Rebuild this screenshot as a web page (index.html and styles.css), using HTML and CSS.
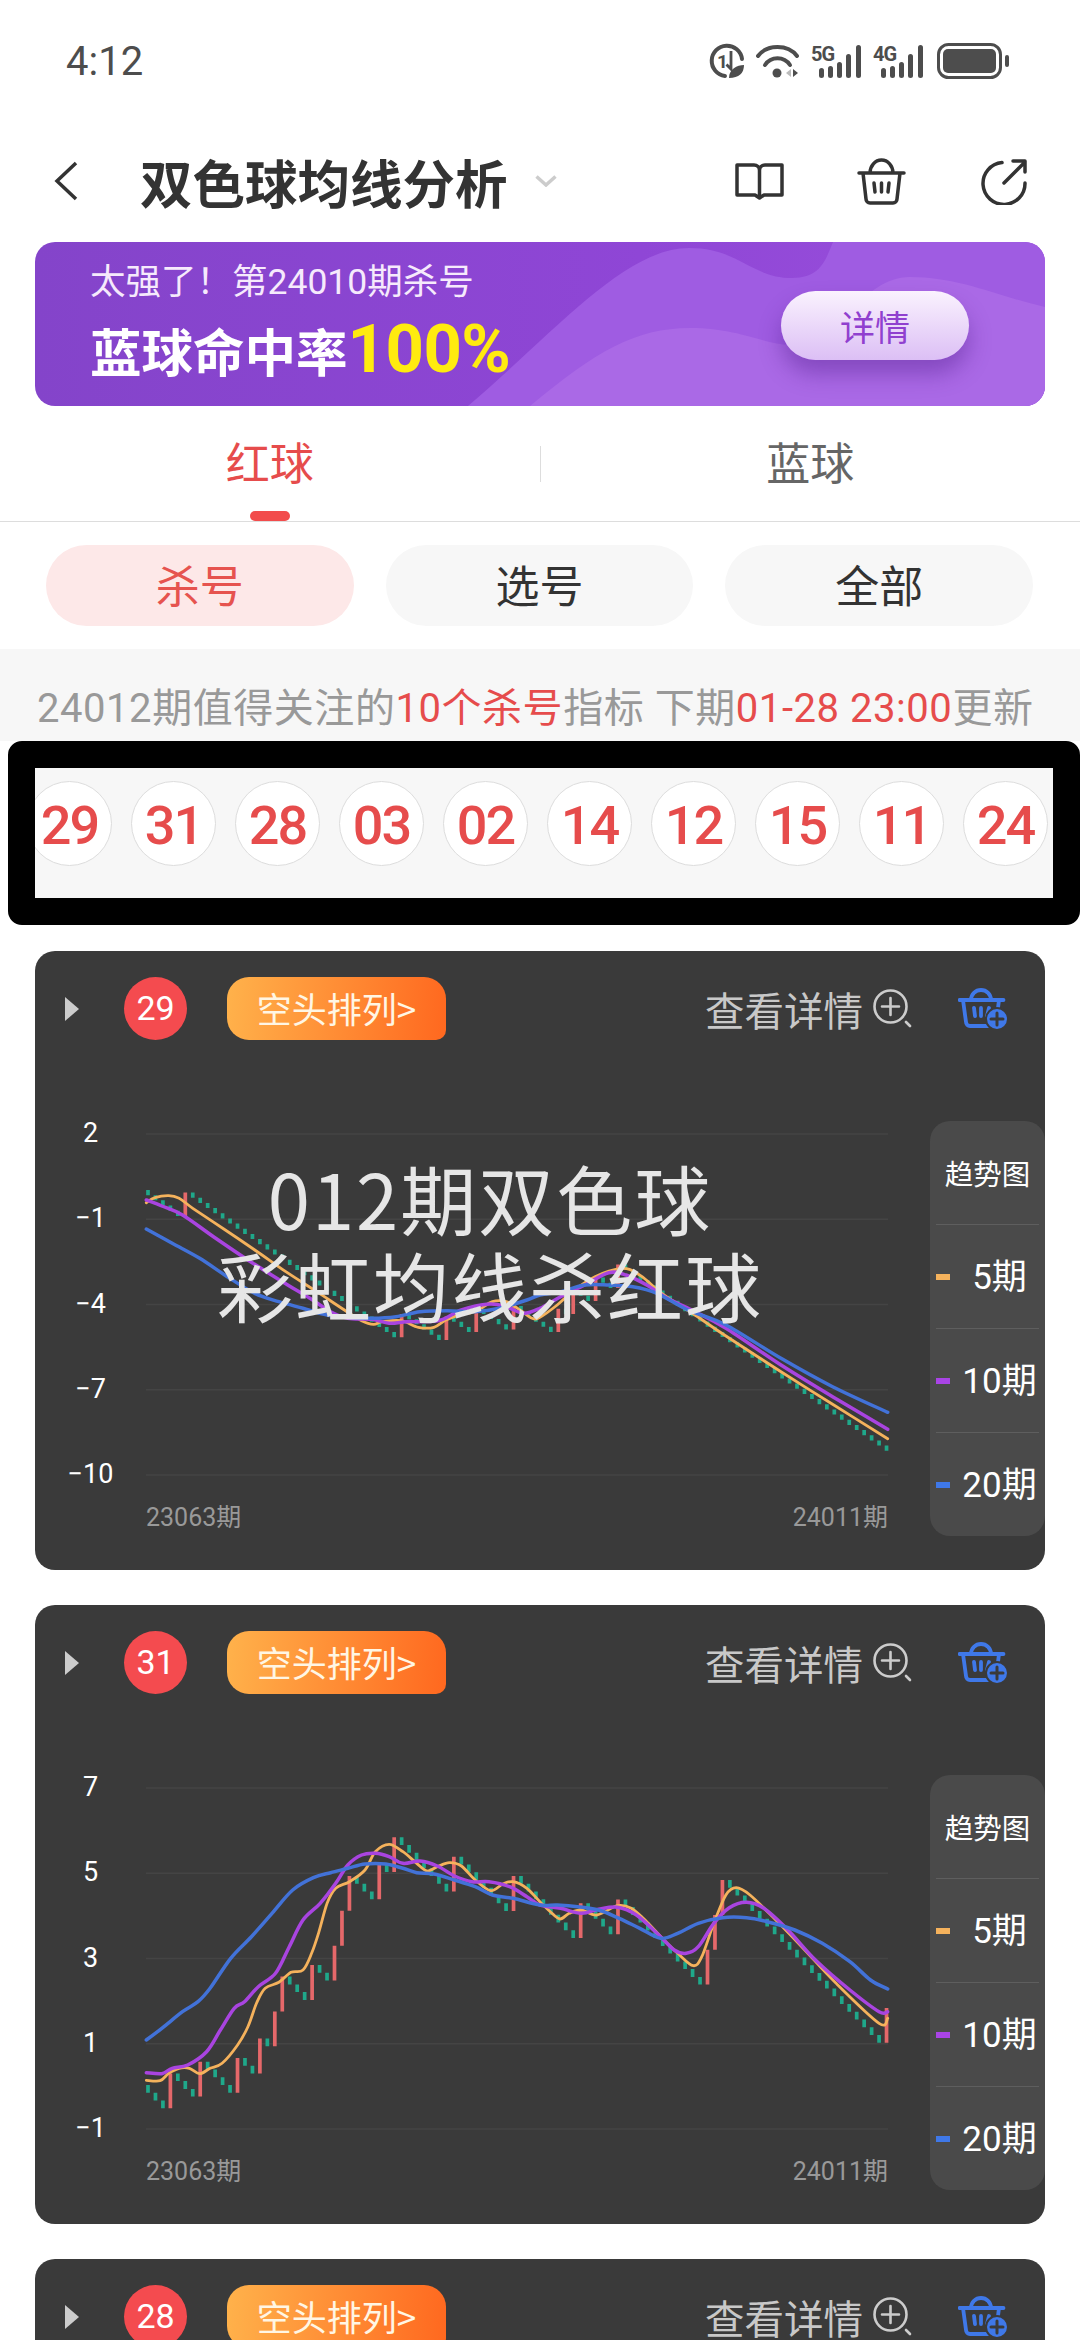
FILE: index.html
```html
<!DOCTYPE html>
<html lang="zh-CN">
<head>
<meta charset="utf-8">
<title>双色球均线分析</title>
<link rel="stylesheet" href="styles.css">
</head>
<body>
<div class="status">
  <span class="time">4:12</span>
  <div class="status-icons">
    <svg class="si-data" viewBox="0 0 34 34"><path class="st" d="M15 32A15.200 15.200 0 1 1 32 15"/><text class="si-one" x="7" y="24">1</text><path class="st2" d="M21 7v18l-4.500-4.500"/><path class="sf" d="M19 34c0-9 8-13 15-13 0 8-5 13-15 13z"/></svg>
    <svg class="si-wifi" viewBox="0 0 43 33"><path class="st" d="M2 11C11-1 32-1 41 11"/><path class="st" d="M9 20C15 11 28 11 34 20"/><circle class="sf" cx="21" cy="28" r="4.500"/><path class="sf-l" d="M35 24v8l-5-4z"/><path class="sf" d="M37 24v8l5-4z"/></svg>
    <svg class="si-sig" viewBox="0 0 50 33"><text class="si-g" x="0" y="16">5G</text><rect class="sf" x="8" y="23" width="5" height="10" rx="2.500"/><rect class="sf" x="17" y="21" width="5" height="12" rx="2.500"/><rect class="sf" x="26" y="17" width="5" height="16" rx="2.500"/><rect class="sf" x="35" y="9" width="5" height="24" rx="2.500"/><rect class="sf" x="45" y="0" width="5" height="33" rx="2.500"/></svg>
    <svg class="si-sig" viewBox="0 0 50 33"><text class="si-g" x="0" y="16">4G</text><rect class="sf" x="8" y="23" width="5" height="10" rx="2.500"/><rect class="sf" x="17" y="21" width="5" height="12" rx="2.500"/><rect class="sf" x="26" y="17" width="5" height="16" rx="2.500"/><rect class="sf" x="35" y="9" width="5" height="24" rx="2.500"/><rect class="sf" x="45" y="0" width="5" height="33" rx="2.500"/></svg>
    <svg class="si-bat" viewBox="0 0 72 36"><rect class="bat-o" x="1.500" y="1.500" width="62" height="33" rx="10"/><rect class="sf" x="6" y="6" width="53" height="24" rx="5"/><rect class="sf" x="68" y="12" width="4" height="12" rx="2"/></svg>
  </div>
</div>

<header class="topbar">
  <svg class="back" viewBox="0 0 24 40"><path d="M22 2L3 20l19 18"/></svg>
  <h1 class="title">双色球均线分析</h1>
  <svg class="caret" viewBox="0 0 22 12"><path d="M1.500 1.500L11 10l9.500-8.500"/></svg>
  <div class="top-actions">
    <svg class="ic-book" viewBox="0 0 49 38"><path d="M24.500 35V8.500A5.500 5.500 0 0 0 19 3H2v30h18l4.500 3 4.500-3h18V3H30a5.500 5.500 0 0 0-5.500 5.500"/></svg>
    <svg class="ic-cart" viewBox="0 0 49 47"><path d="M13 15a11.500 13 0 0 1 23 0M2 15h45M6 15l3 26a4 4 0 0 0 4 4h23a4 4 0 0 0 4-4l3-26M17 25l1 9M24.500 25v9M32 25l-1 9"/></svg>
    <svg class="ic-share" viewBox="0 0 46 47"><path d="M21 4.500A21 21 0 1 0 44 25M23 25L44 4M32 3h12v11"/></svg>
  </div>
</header>

<section class="banner">
  <svg class="banner-art" viewBox="0 0 1010 164" preserveAspectRatio="none">
    <path class="wave-a" d="M433 164C520 90 590 6 654 6c50 0 62 30 103 30 30 0 34-20 41-36h212v164z"/>
    <path class="wave-b" d="M495 164C560 110 600 86 655 86c50 0 75 17 100 17 50 0 70-68 120-68 50 0 90 20 135 30v99z"/>
  </svg>
  <div class="banner-text">
    <p class="banner-l1">太强了！第24010期杀号</p>
    <p class="banner-l2">蓝球命中率<span class="yellow">100%</span></p>
  </div>
  <button class="banner-btn">详情</button>
</section>

<nav class="tabs">
  <div class="tab tab-on">红球</div>
  <div class="tab">蓝球</div>
</nav>

<div class="pills">
  <div class="pill pill-on">杀号</div>
  <div class="pill">选号</div>
  <div class="pill">全部</div>
</div>

<div class="notice">24012期值得关注的<em>10个杀号</em>指标 下期<em>01-28 23:00</em>更新</div>

<div class="balls-frame">
  <div class="balls">
    <span class="ball">29</span><span class="ball">31</span><span class="ball">28</span><span class="ball">03</span><span class="ball">02</span><span class="ball">14</span><span class="ball">12</span><span class="ball">15</span><span class="ball">11</span><span class="ball">24</span>
  </div>
</div>

<main class="cards">
  <article class="card">
    <div class="card-head">
      <i class="tri"></i><span class="num">29</span><span class="tag">空头排列&gt;</span>
      <span class="more">查看详情</span>
      <svg class="ic-zoom" viewBox="0 0 40 40"><circle cx="17.500" cy="17.500" r="16"/><path d="M17.500 9v17M9 17.500h17M33 33l4 4"/></svg>
      <svg class="ic-add" viewBox="0 0 50 42"><path d="M13 12a10 10 0 0 1 20 0M1.500 12h44M5 12l3 22a4 4 0 0 0 4 4h18M41 12l-1 8M16 20l1 8M23 20v8M31 20l-2 8"/><circle class="add-dot" cx="39" cy="31" r="11"/><path class="add-plus" d="M39 25v12M33 31h12"/></svg>
    </div>
    <div class="card-body">
      <div class="yaxis"><span>2</span><span>−1</span><span>−4</span><span>−7</span><span>−10</span></div>
      <div class="plot">
        <svg class="chart" data-chart="a" width="742" height="341" viewBox="0 0 742 341"></svg>
        <div class="xaxis"><span>23063期</span><span>24011期</span></div>
      </div>
      <div class="legend">
        <div class="lg-title">趋势图</div>
        <div class="lg-row"><i class="sw sw-o"></i><span>5期</span></div>
        <div class="lg-row"><i class="sw sw-p"></i><span>10期</span></div>
        <div class="lg-row"><i class="sw sw-b"></i><span>20期</span></div>
      </div>
    </div>
    <div class="watermark">012期双色球<br>彩虹均线杀红球</div>
  </article>

  <article class="card">
    <div class="card-head">
      <i class="tri"></i><span class="num">31</span><span class="tag">空头排列&gt;</span>
      <span class="more">查看详情</span>
      <svg class="ic-zoom" viewBox="0 0 40 40"><circle cx="17.500" cy="17.500" r="16"/><path d="M17.500 9v17M9 17.500h17M33 33l4 4"/></svg>
      <svg class="ic-add" viewBox="0 0 50 42"><path d="M13 12a10 10 0 0 1 20 0M1.500 12h44M5 12l3 22a4 4 0 0 0 4 4h18M41 12l-1 8M16 20l1 8M23 20v8M31 20l-2 8"/><circle class="add-dot" cx="39" cy="31" r="11"/><path class="add-plus" d="M39 25v12M33 31h12"/></svg>
    </div>
    <div class="card-body">
      <div class="yaxis"><span>7</span><span>5</span><span>3</span><span>1</span><span>−1</span></div>
      <div class="plot">
        <svg class="chart" data-chart="b" width="742" height="341" viewBox="0 0 742 341"></svg>
        <div class="xaxis"><span>23063期</span><span>24011期</span></div>
      </div>
      <div class="legend">
        <div class="lg-title">趋势图</div>
        <div class="lg-row"><i class="sw sw-o"></i><span>5期</span></div>
        <div class="lg-row"><i class="sw sw-p"></i><span>10期</span></div>
        <div class="lg-row"><i class="sw sw-b"></i><span>20期</span></div>
      </div>
    </div>
  </article>

  <article class="card">
    <div class="card-head">
      <i class="tri"></i><span class="num">28</span><span class="tag">空头排列&gt;</span>
      <span class="more">查看详情</span>
      <svg class="ic-zoom" viewBox="0 0 40 40"><circle cx="17.500" cy="17.500" r="16"/><path d="M17.500 9v17M9 17.500h17M33 33l4 4"/></svg>
      <svg class="ic-add" viewBox="0 0 50 42"><path d="M13 12a10 10 0 0 1 20 0M1.500 12h44M5 12l3 22a4 4 0 0 0 4 4h18M41 12l-1 8M16 20l1 8M23 20v8M31 20l-2 8"/><circle class="add-dot" cx="39" cy="31" r="11"/><path class="add-plus" d="M39 25v12M33 31h12"/></svg>
    </div>
  </article>
</main>
<script src="chart.js"></script>
</body>
</html>
```
FILE: styles.css
```css
* { box-sizing: border-box; }
html, body { margin: 0; padding: 0; background: #fff; }
html { height: 2340px; overflow: hidden; }
body {
  width: 1080px; height: 2340px; overflow: hidden;
  font-family: Roboto, "Noto Sans CJK SC", sans-serif;
  color: #333;
}
p, h1 { margin: 0; }

/* status bar */
.status { height: 124px; display: flex; align-items: center; justify-content: space-between; padding: 0 71px 2px 66px; }
.time { font-size: 40px; color: #4d4d4d; }
.status-icons { display: flex; align-items: center; gap: 12px; }
.status-icons svg { overflow: visible; }
.si-data { width: 34px; height: 34px; }
.si-wifi { width: 43px; height: 33px; }
.si-sig { width: 50px; height: 33px; }
.si-bat { width: 72px; height: 36px; margin-left: 2px; }
.st { fill: none; stroke: #4d4d4d; stroke-width: 4; stroke-linecap: round; }
.st2 { fill: none; stroke: #4d4d4d; stroke-width: 2.800; }
.sf { fill: #4d4d4d; }
.sf-l { fill: #bbb; }
.si-one { font: 700 19px Roboto, sans-serif; fill: #4d4d4d; }
.si-g { font: 700 20px Roboto, sans-serif; fill: #4d4d4d; letter-spacing: -1px; }
.bat-o { fill: none; stroke: #4d4d4d; stroke-width: 3; }

/* top bar */
.topbar { height: 118px; display: flex; align-items: center; padding: 0 53px 4px 54px; }
.back { width: 24px; height: 40px; }
.back path { fill: none; stroke: #333; stroke-width: 3.500; }
.title { margin-left: 62px; font-size: 52.500px; line-height: 70px; font-weight: 700; color: #333; font-family: "Noto Sans CJK SC", sans-serif; }
.caret { width: 22px; height: 12px; margin: 0 0 0 27px; }
.caret path { fill: none; stroke: #ccc; stroke-width: 3.500; }
.top-actions { margin-left: auto; display: flex; align-items: center; }
.top-actions svg { fill: none; stroke: #333; stroke-width: 3.500; stroke-linecap: round; stroke-linejoin: round; }
.ic-book { width: 49px; height: 38px; }
.ic-cart { width: 49px; height: 47px; margin-left: 73px; }
.ic-share { width: 46px; height: 47px; margin-left: 75px; }

/* banner */
.banner {
  position: relative; overflow: hidden;
  margin: 0 35px; height: 164px; border-radius: 20px;
  background: linear-gradient(90deg, #8444ca, #8f46d6 60%, #9a50dc);
  display: flex; align-items: center; justify-content: space-between;
  padding: 0 76px 0 55px;
}
.banner-art { position: absolute; inset: 0; width: 100%; height: 100%; }
.wave-a { fill: #9f5ce2; }
.wave-b { fill: #aa69e6; }
.banner-text, .banner-btn { position: relative; }
.banner-text { color: #fff; }
.banner-l1 { font-size: 35.500px; line-height: 50px; color: #f6eafc; margin-top: -3px; }
.banner-l2 { font-size: 51.500px; line-height: 66px; font-weight: 700; margin-top: 9px; }
.yellow { color: #ffeb0f; font-size: 67px; letter-spacing: -.5px; }
.banner-btn {
  width: 188px; height: 69px; border: 0; border-radius: 35px; margin-top: 2px;
  background: linear-gradient(180deg, #faf2fe, #dcbff5);
  color: #9040cf; font: 400 35px "Noto Sans CJK SC", sans-serif;
  box-shadow: 0 14px 22px rgba(70, 20, 130, .38);
}

/* tabs */
.tabs { height: 116px; display: flex; align-items: center; border-bottom: 1px solid #ddd; position: relative; }
.tab { flex: 1; text-align: center; font-size: 44px; line-height: 39px; color: #666; position: relative; height: 36px; }
.tab + .tab { border-left: 1px solid #ddd; }
.tab-on { color: #e64c4c; }
.tab-on::after { content: ""; position: absolute; left: 250px; top: 65px; width: 40px; height: 10px; border-radius: 5px; background: #f24c4c; }

/* filter pills */
.pills { display: flex; gap: 32px; padding: 23px 47px 23px 46px; }
.pill { flex: 1; height: 81px; border-radius: 41px; background: #f7f7f7; font-size: 44px; line-height: 86px; text-align: center; color: #333; }
.pill-on { background: #fde8e8; color: #e6534f; }

/* notice */
.notice { height: 92px; background: #f7f7f7; padding-left: 37px; font-size: 40px; line-height: 120px; color: #999; white-space: nowrap; overflow: hidden; letter-spacing: .55px; }
.notice em { font-style: normal; color: #e64c4c; }

/* number strip */
.balls-frame { margin-left: 8px; height: 184px; border: 27px solid #000; border-radius: 14px; background: #f7f7f7; overflow: hidden; width: 1072px; }
.balls { display: flex; gap: 19px; margin-left: -8px; padding-top: 13px; }
.ball { flex: none; width: 85px; height: 85px; border-radius: 50%; background: #fff; border: 1px solid #ddd; color: #e64c4c; font-size: 54px; font-weight: 500; line-height: 87px; text-align: center; letter-spacing: -2px; }

/* chart cards */
.cards { padding: 26px 35px 0; display: flex; flex-direction: column; gap: 35px; }
.card { position: relative; flex: none; height: 619px; border-radius: 20px; background: #3a3a3a; }
.card-head { display: flex; align-items: center; height: 63px; position: relative; top: 26px; padding-left: 30px; }
.tri { width: 0; height: 0; border-left: 14px solid #ccc; border-top: 12px solid transparent; border-bottom: 12px solid transparent; }
.num { margin-left: 45px; width: 63px; height: 63px; border-radius: 50%; background: #f44b4f; color: #fff; font-size: 34px; line-height: 63px; text-align: center; }
.tag { margin-left: 40px; width: 219px; height: 63px; border-radius: 22px 22px 10px 22px; background: linear-gradient(95deg, #ffb24b, #ff681f); color: #fff6e4; font: 400 35px/62px "Noto Sans CJK SC", sans-serif; text-align: center; }
.more { margin-left: auto; font: 400 39.500px/63px "Noto Sans CJK SC", sans-serif; color: #c8c8c8; }
.ic-zoom { width: 40px; height: 40px; margin-left: 10px; fill: none; stroke: #ccc; stroke-width: 2.600; stroke-linecap: round; }
.ic-add { width: 50px; height: 42px; margin: 0 37px 0 45px; fill: none; stroke: #3f78e8; stroke-width: 3.800; stroke-linecap: round; }
.add-dot { fill: #3f78e8; stroke: #3a3a3a; stroke-width: 2; }
.add-plus { stroke: #3a3a3a; stroke-width: 3; }

.card-body { display: flex; margin-top: 76px; height: 446px; }
.yaxis { width: 111px; display: flex; flex-direction: column; }
.yaxis span { height: 85.300px; line-height: 87px; font-size: 27px; color: #fff; text-align: center; }
.plot { width: 742px; padding-top: 43px; }
.chart { display: block; overflow: visible; }
.xaxis { display: flex; justify-content: space-between; margin-top: 27px; font-size: 25px; line-height: 34px; color: #999; }
.legend { width: 115px; height: 415px; margin: 31px 0 0 42px; border-radius: 20px; background: #4a4a4a; padding: 0 6px; color: #fff; }
.lg-title { height: 103px; text-align: center; font: 400 28.500px/103px "Noto Sans CJK SC", sans-serif; white-space: nowrap; margin: 0 -6px; }
.lg-row { height: 104px; border-top: 1px solid #5e5e5e; display: flex; align-items: center; font-size: 35px; }
.lg-row span { flex: 1; text-align: center; white-space: nowrap; margin-bottom: 6px; padding-left: 10px; }
.sw { width: 14px; height: 6px; flex: none; }
.sw-o { background: #f5b25c; }
.sw-p { background: #a944e6; }
.sw-b { background: #3f78e8; }

.watermark { position: absolute; left: 0; top: 203px; width: 910px; text-align: center; font: 400 76px/87px "Noto Sans CJK SC", sans-serif; color: #e6e6e6; letter-spacing: 2px; pointer-events: none; }

/* chart marks */
.grid { stroke: #444; stroke-width: 1.500; }
.bar-r { stroke: #e5686a; stroke-width: 3.700; fill: none; }
.bar-g { stroke: #1fa88a; stroke-width: 3.700; fill: none; }
.ln { fill: none; stroke-linecap: round; stroke-linejoin: round; }
.ln-o { stroke: #f5b25c; stroke-width: 2.800; }
.ln-p { stroke: #a944e0; stroke-width: 3.500; }
.ln-b { stroke: #4272d8; stroke-width: 3.500; }
```
FILE: chart.js
```js
var Z = 2.904, W = 1568;
function shift(a) { return a.map(function (p) { return [p[0] + W, p[1]]; }); }

var CHARTS = {
  a: {
    yoff: 53, open: 57, g: 5.17, r: 23.3,
    reds: [5, 34, 40, 44, 49, 55, 57, 60, 63],
    o: [[425,368],[450,353],[490,347],[520,355],[560,385],[650,447],[740,510],[830,575],[920,635],[1000,690],[1050,722],[1085,733],[1110,725],[1165,722],[1215,742],[1260,742],[1295,720],[1340,703],[1381,695],[1430,665],[1470,665],[1510,690],[1545,715]].concat(shift([[0,712],[50,675],[100,630],[160,590],[220,568],[260,568],[300,593],[360,645],[450,705],[540,768],[700,875],[850,973],[1010,1076]])),
    p: [[425,360],[470,378],[530,405],[620,470],[720,540],[820,605],[900,655],[960,695],[1010,715],[1080,718],[1130,730],[1180,725],[1220,725],[1280,720],[1340,690],[1420,672],[1470,680],[1520,700]].concat(shift([[0,685],[60,650],[130,615],[200,578],[250,585],[310,615],[370,655],[450,695],[540,745],[700,855],[850,950],[1010,1048]])),
    b: [[425,447],[500,490],[580,535],[660,590],[740,640],[810,665],[880,685],[950,705],[1010,712],[1080,715],[1150,710],[1220,695],[1300,692],[1380,695],[1450,685],[1530,660]].concat(shift([[0,645],[60,635],[130,615],[200,615],[270,620],[340,640],[430,690],[540,735],[700,835],[850,920],[1010,997]]))
  },
  b: {
    yoff: 47, open: 298, g: 7.75, r: 34.85,
    reds: [3, 7, 12, 15, 17, 18, 22, 25, 26, 27, 31, 33, 41, 49, 58, 63, 75, 76, 77, 99],
    o: [[425,1021],[465,1022],[490,1000],[520,985],[550,985],[580,1001],[610,985],[645,970],[690,915],[720,860],[745,790],[770,745],[810,727],[845,697],[880,690],[905,640],[925,580],[950,490],[975,445],[1015,425],[1060,390],[1090,335],[1130,313],[1170,335],[1210,370],[1240,393],[1270,380],[1305,368],[1340,378],[1380,420],[1425,452],[1460,432],[1490,425],[1530,445]].concat(shift([[0,485],[30,515],[58,537],[85,520],[120,510],[165,525],[225,497],[265,505],[310,545],[360,600],[400,640],[445,677],[470,650],[505,550],[540,465],[570,443],[610,465],[680,535],[760,620],[860,730],[985,850],[1010,835]])),
    p: [[425,998],[470,1001],[500,985],[545,975],[600,935],[640,870],[680,805],[710,785],[750,740],[800,700],[840,620],[880,540],[930,490],[975,430],[1010,375],[1050,345],[1090,340],[1130,350],[1170,370],[1220,363],[1270,378],[1320,408],[1370,425],[1420,425],[1480,440],[1530,470]].concat(shift([[0,495],[60,505],[120,520],[170,508],[225,502],[280,525],[340,580],[390,630],[425,640],[460,620],[505,550],[550,503],[600,487],[650,505],[720,570],[800,660],[900,750],[985,815],[1010,815]])),
    b: [[425,900],[470,865],[530,815],[575,785],[610,745],[670,655],[730,590],[790,520],[850,450],[910,413],[960,398],[1010,385],[1060,372],[1120,372],[1170,385],[1210,398],[1260,402],[1320,420],[1380,440],[1430,465],[1490,475]].concat(shift([[0,495],[50,495],[110,500],[170,510],[230,535],[290,565],[350,595],[400,580],[460,550],[530,533],[600,533],[660,545],[740,570],[820,610],[900,665],[960,720],[1010,747]]))
  }
};

function el(svg, name, attrs) {
  var n = document.createElementNS('http://www.w3.org/2000/svg', name);
  for (var k in attrs) n.setAttribute(k, attrs[k]);
  svg.appendChild(n);
}

function spline(pts) {
  var d = 'M' + pts[0][0].toFixed(1) + ' ' + pts[0][1].toFixed(1);
  for (var i = 0; i < pts.length - 1; i++) {
    var a = pts[Math.max(i - 1, 0)], b = pts[i], c = pts[i + 1], e = pts[Math.min(i + 2, pts.length - 1)];
    d += 'C' + (b[0] + (c[0] - a[0]) / 6).toFixed(1) + ' ' + (b[1] + (c[1] - a[1]) / 6).toFixed(1) +
         ' ' + (c[0] - (e[0] - b[0]) / 6).toFixed(1) + ' ' + (c[1] - (e[1] - b[1]) / 6).toFixed(1) +
         ' ' + c[0].toFixed(1) + ' ' + c[1].toFixed(1);
  }
  return d;
}

document.querySelectorAll('.chart').forEach(function (svg) {
  var c = CHARTS[svg.getAttribute('data-chart')];
  for (var i = 0; i < 5; i++) {
    var gy = 1 + i * 85.25;
    el(svg, 'line', { 'class': 'grid', x1: 0, x2: 742, y1: gy, y2: gy });
  }
  var y = c.open, red = '', green = '';
  for (var n = 0; n < 100; n++) {
    var x = (2 + n * 7.46).toFixed(2), isRed = c.reds.indexOf(n) >= 0;
    var next = isRed ? y - c.r : y + c.g;
    var seg = 'M' + x + ' ' + y.toFixed(1) + 'L' + x + ' ' + next.toFixed(1);
    if (isRed) red += seg; else green += seg;
    y = next;
  }
  el(svg, 'path', { 'class': 'bar-g', d: green });
  el(svg, 'path', { 'class': 'bar-r', d: red });
  [['o', 'ln-o'], ['p', 'ln-p'], ['b', 'ln-b']].forEach(function (s) {
    var pts = c[s[0]].map(function (p) { return [p[0] / Z - 146, p[1] / 3 - c.yoff]; });
    el(svg, 'path', { 'class': 'ln ' + s[1], d: spline(pts) });
  });
});
```
